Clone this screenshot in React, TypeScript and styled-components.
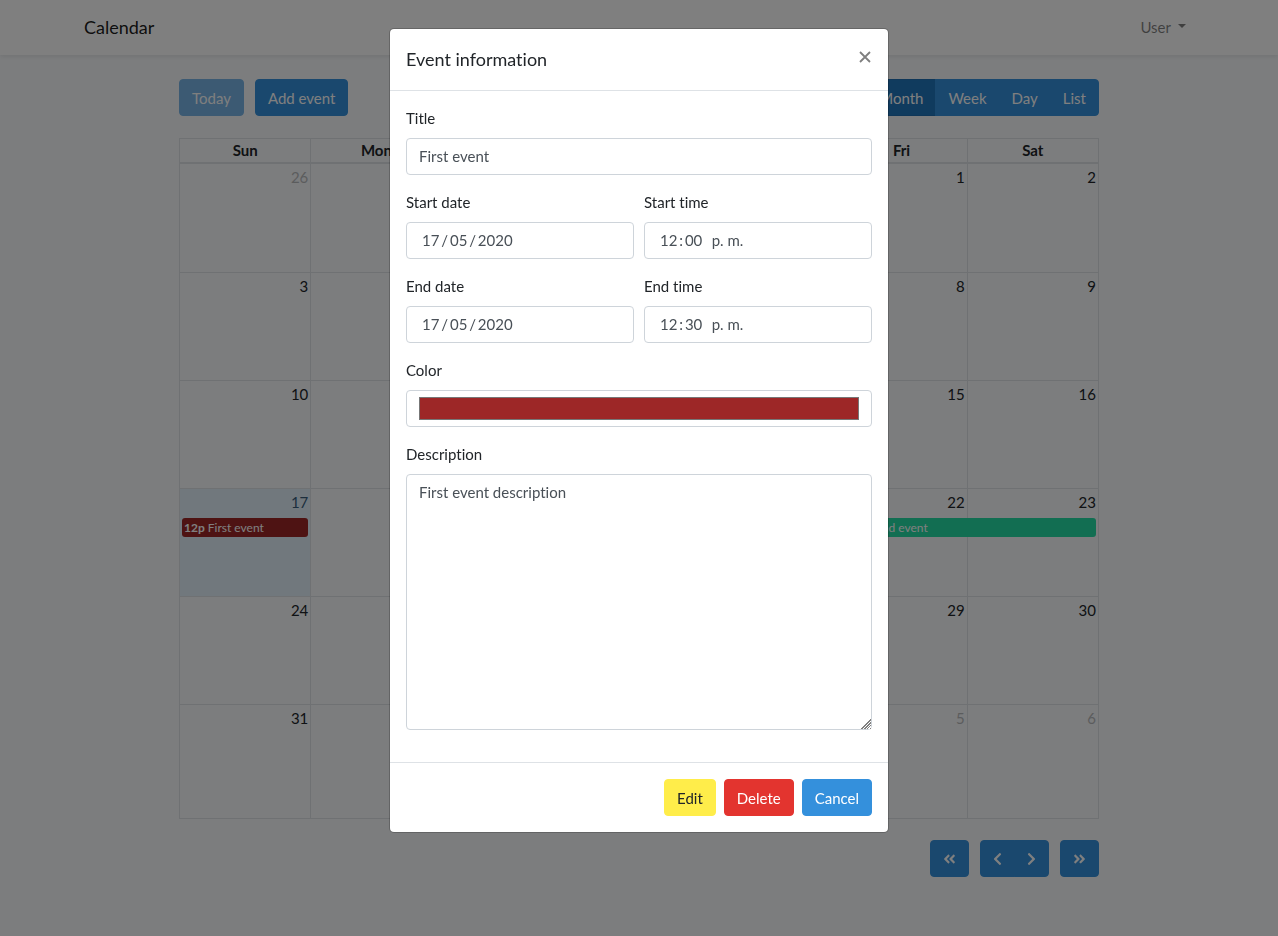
import React from "react";
import styled, { createGlobalStyle, css } from "styled-components";
import {
  FaAngleDoubleLeft,
  FaAngleDoubleRight,
  FaChevronLeft,
  FaChevronRight,
} from "react-icons/fa";

const GlobalStyle = createGlobalStyle`
  *, *::before, *::after { box-sizing: border-box; }
  body {
    margin: 0;
    background: #f8fafc;
    color: #212529;
    font-family: Lato, "Open Sans", sans-serif;
    font-size: 15px;
    font-variant-ligatures: none;
    line-height: 23px;
  }
  button, input, textarea { font: inherit; margin: 0; }
`;

/* ---------- page header ---------- */

const NavBar = styled.nav`
  position: relative;
  background: #fff;
  box-shadow: 0 2px 4px rgba(0, 0, 0, 0.075);
`;

const Container = styled.div`
  max-width: 1140px;
  margin: 0 auto;
`;

const NavContent = styled(Container)`
  display: flex;
  align-items: center;
  justify-content: space-between;
  height: 55px;
  padding: 0 15px;
`;

const Brand = styled.a`
  color: rgba(0, 0, 0, 0.9);
  font-size: 18px;
  line-height: 29px;
  text-decoration: none;
`;

const UserLink = styled.a`
  display: flex;
  align-items: center;
  gap: 7px;
  padding: 8px;
  color: rgba(0, 0, 0, 0.5);
  text-decoration: none;

  &::after {
    content: "";
    margin-bottom: 3px;
    border-top: 4px solid;
    border-right: 4px solid transparent;
    border-left: 4px solid transparent;
  }
`;

/* ---------- buttons ---------- */

const tones = {
  primary: { background: "#3490dc", color: "#fff" },
  danger: { background: "#e3342f", color: "#fff" },
  warning: { background: "#ffed4a", color: "#212529" },
};

const Button = styled.button<{ $tone?: keyof typeof tones; $active?: boolean }>`
  display: inline-flex;
  align-items: center;
  justify-content: center;
  height: 37px;
  padding: 1px 12px 0;
  border: 1px solid transparent;
  border-radius: 4px;
  cursor: pointer;
  ${({ $tone = "primary" }) => css`
    background: ${tones[$tone].background};
    border-color: ${tones[$tone].background};
    color: ${tones[$tone].color};
  `}
  ${({ $active }) =>
    $active &&
    css`
      background: #2176bd;
      border-color: #1f6fb2;
    `}

  &:disabled {
    opacity: 0.65;
    cursor: default;
  }
`;

const ButtonGroup = styled.div`
  display: flex;

  ${Button}:not(:first-child) {
    margin-left: -1px;
    border-top-left-radius: 0;
    border-bottom-left-radius: 0;
  }
  ${Button}:not(:last-child) {
    border-top-right-radius: 0;
    border-bottom-right-radius: 0;
  }
`;

/* ---------- calendar ---------- */

const Main = styled.main`
  width: calc(100% * 5 / 6);
  margin: 0 auto;
  padding: 24px 15px;
`;

const Toolbar = styled.div`
  display: flex;
  justify-content: space-between;
  margin-bottom: 22px;
`;

const ToolbarGroup = styled.div`
  display: flex;
  gap: 11px;
`;

const PagerBar = styled(ToolbarGroup)`
  justify-content: flex-end;
  margin-top: 21px;

  svg {
    width: 13px;
    height: 14px;
  }
  ${ButtonGroup} svg {
    width: 9px;
  }
`;

const MonthTable = styled.table`
  width: 100%;
  table-layout: fixed;
  border-collapse: collapse;
  border: 1px solid #dee2e6;
`;

const WeekdayCell = styled.th`
  height: 24px;
  padding: 0;
  border: 1px solid #dee2e6;
  border-bottom-width: 2px;
  font-weight: 700;
  line-height: 22px;
`;

const DayCell = styled.td<{ $today: boolean }>`
  height: 108px;
  padding: 0;
  border: 1px solid #dee2e6;
  vertical-align: top;
  ${({ $today }) => $today && "background: #e2f0fb; color: #385d7a;"}

  tr:first-child > & {
    height: 110px;
  }
  tr:last-child > & {
    height: 114px;
  }
`;

const DayNumber = styled.div<{ $muted: boolean }>`
  padding: 2px;
  text-align: right;
  opacity: ${({ $muted }) => ($muted ? 0.3 : 1)};
`;

const EventLink = styled.a<{ $color: string; $days: number }>`
  position: relative;
  display: block;
  width: calc(100% * ${({ $days }) => $days} + ${({ $days }) => $days - 1}px - 4px);
  height: 19px;
  margin: 2px 2px 0;
  padding: 0 2px;
  border-radius: 3px;
  background: ${({ $color }) => $color};
  color: #fff;
  font-size: 12px;
  line-height: 19px;
  text-decoration: none;
  white-space: nowrap;
`;

/* ---------- dialog ---------- */

const Backdrop = styled.div`
  position: fixed;
  inset: 0;
  overflow-y: auto;
  background: rgba(0, 0, 0, 0.5);
`;

const Dialog = styled.div`
  max-width: 500px;
  margin: 28px auto;
  border: 1px solid rgba(0, 0, 0, 0.2);
  border-radius: 5px;
  background: #fff;
  background-clip: padding-box;
`;

const DialogHeader = styled.header`
  display: flex;
  align-items: flex-start;
  justify-content: space-between;
  padding: 16px;
  border-bottom: 1px solid #dee2e6;
`;

const DialogTitle = styled.h5`
  margin: 0;
  font-size: 18px;
  font-weight: 400;
  line-height: 29px;
`;

const CloseButton = styled.button`
  display: flex;
  padding: 6px 1px;
  border: 0;
  background: none;
  color: #7f7f7f;
  cursor: pointer;
`;

const DialogBody = styled.div`
  display: flex;
  flex-direction: column;
  gap: 16px;
  padding: 16px 16px 32px;
`;

const FieldRow = styled.div`
  display: grid;
  grid-template-columns: 1fr 1fr;
  gap: 10px;
`;

const Field = styled.div`
  display: flex;
  flex-direction: column;
  gap: 8px;
  min-width: 0;
`;

const control = css`
  display: block;
  width: 100%;
  padding: 6px 12px;
  border: 1px solid #ced4da;
  border-radius: 4px;
  background: #fff;
  color: #495057;
`;

const Input = styled.input<{ $segmented?: boolean }>`
  ${control}
  height: 37px;
  padding-top: 5px;
  padding-bottom: 7px;
  ${({ $segmented }) => $segmented && "padding-left: 15px;"}
`;

const ColorInput = styled.input`
  ${control}
  height: 37px;

  &::-webkit-color-swatch-wrapper {
    padding: 0;
  }
`;

const TextArea = styled.textarea`
  ${control}
  height: 256px;
  resize: vertical;

  &::-webkit-resizer {
    background:
      linear-gradient(135deg, #fff 62%, transparent 62%),
      repeating-linear-gradient(135deg, #808080 0 1px, #fff 1px 2px);
  }
`;

const DialogFooter = styled.footer`
  display: flex;
  justify-content: flex-end;
  gap: 8px;
  padding: 16px;
  border-top: 1px solid #dee2e6;
`;

/* ---------- data ---------- */

const weekdays = ["Sun", "Mon", "Tue", "Wed", "Thu", "Fri", "Sat"];

const weeks = [0, 1, 2, 3, 4, 5].map((week) =>
  weekdays.map((_, day) => {
    const date = new Date(2020, 3, 26 + week * 7 + day);
    return { day: date.getDate(), inMonth: date.getMonth() === 4 };
  })
);

const events: Record<number, { time: string; title: string; color: string; days: number }> = {
  17: { time: "12p", title: "First event", color: "#9d2727", days: 1 },
  22: { time: "9a", title: "Second event", color: "#24dca5", days: 2 },
};

const today = 17;

const views = ["Month", "Week", "Day", "List"];

function Calendar() {
  return (
    <MonthTable>
      <thead>
        <tr>
          {weekdays.map((name) => (
            <WeekdayCell key={name} scope="col">
              {name}
            </WeekdayCell>
          ))}
        </tr>
      </thead>
      <tbody>
        {weeks.map((week, index) => (
          <tr key={index}>
            {week.map(({ day, inMonth }) => {
              const event = inMonth ? events[day] : undefined;
              return (
                <DayCell key={day} $today={inMonth && day === today}>
                  <DayNumber $muted={!inMonth}>{day}</DayNumber>
                  {event && (
                    <EventLink href="#" $color={event.color} $days={event.days}>
                      <b>{event.time}</b> {event.title}
                    </EventLink>
                  )}
                </DayCell>
              );
            })}
          </tr>
        ))}
      </tbody>
    </MonthTable>
  );
}

function EventDialog() {
  return (
    <Backdrop>
      <Dialog role="dialog" aria-modal="true" aria-labelledby="dialog-title">
        <DialogHeader>
          <DialogTitle id="dialog-title">Event information</DialogTitle>
          <CloseButton type="button" aria-label="Close">
            <svg width="12" height="12" viewBox="0 0 12 12" fill="none" stroke="currentColor" strokeWidth="1.8">
              <path d="M1 1l10 10M11 1L1 11" />
            </svg>
          </CloseButton>
        </DialogHeader>
        <DialogBody>
          <Field>
            <label htmlFor="title">Title</label>
            <Input id="title" defaultValue="First event" />
          </Field>
          <FieldRow>
            <Field>
              <label htmlFor="start-date">Start date</label>
              <Input id="start-date" $segmented defaultValue={"17\u2009/\u200905\u2009/\u20092020"} />
            </Field>
            <Field>
              <label htmlFor="start-time">Start time</label>
              <Input id="start-time" $segmented defaultValue={"12\u2009:\u200900\u2002\u2009p. m."} />
            </Field>
          </FieldRow>
          <FieldRow>
            <Field>
              <label htmlFor="end-date">End date</label>
              <Input id="end-date" $segmented defaultValue={"17\u2009/\u200905\u2009/\u20092020"} />
            </Field>
            <Field>
              <label htmlFor="end-time">End time</label>
              <Input id="end-time" $segmented defaultValue={"12\u2009:\u200930\u2002\u2009p. m."} />
            </Field>
          </FieldRow>
          <Field>
            <label htmlFor="color">Color</label>
            <ColorInput id="color" type="color" defaultValue="#9d2727" />
          </Field>
          <Field>
            <label htmlFor="description">Description</label>
            <TextArea id="description" defaultValue="First event description" />
          </Field>
        </DialogBody>
        <DialogFooter>
          <Button type="button" $tone="warning">Edit</Button>
          <Button type="button" $tone="danger">Delete</Button>
          <Button type="button">Cancel</Button>
        </DialogFooter>
      </Dialog>
    </Backdrop>
  );
}

export default function App() {
  return (
    <>
      <GlobalStyle />
      <NavBar>
        <NavContent>
          <Brand href="#">Calendar</Brand>
          <UserLink href="#">User</UserLink>
        </NavContent>
      </NavBar>
      <Container>
        <Main>
          <Toolbar>
            <ToolbarGroup>
              <Button type="button" disabled>Today</Button>
              <Button type="button">Add event</Button>
            </ToolbarGroup>
            <ButtonGroup>
              {views.map((view) => (
                <Button key={view} type="button" $active={view === "Month"}>
                  {view}
                </Button>
              ))}
            </ButtonGroup>
          </Toolbar>
          <Calendar />
          <PagerBar>
            <Button type="button" aria-label="Previous year"><FaAngleDoubleLeft /></Button>
            <ButtonGroup>
              <Button type="button" aria-label="Previous month"><FaChevronLeft /></Button>
              <Button type="button" aria-label="Next month"><FaChevronRight /></Button>
            </ButtonGroup>
            <Button type="button" aria-label="Next year"><FaAngleDoubleRight /></Button>
          </PagerBar>
        </Main>
      </Container>
      <EventDialog />
    </>
  );
}
